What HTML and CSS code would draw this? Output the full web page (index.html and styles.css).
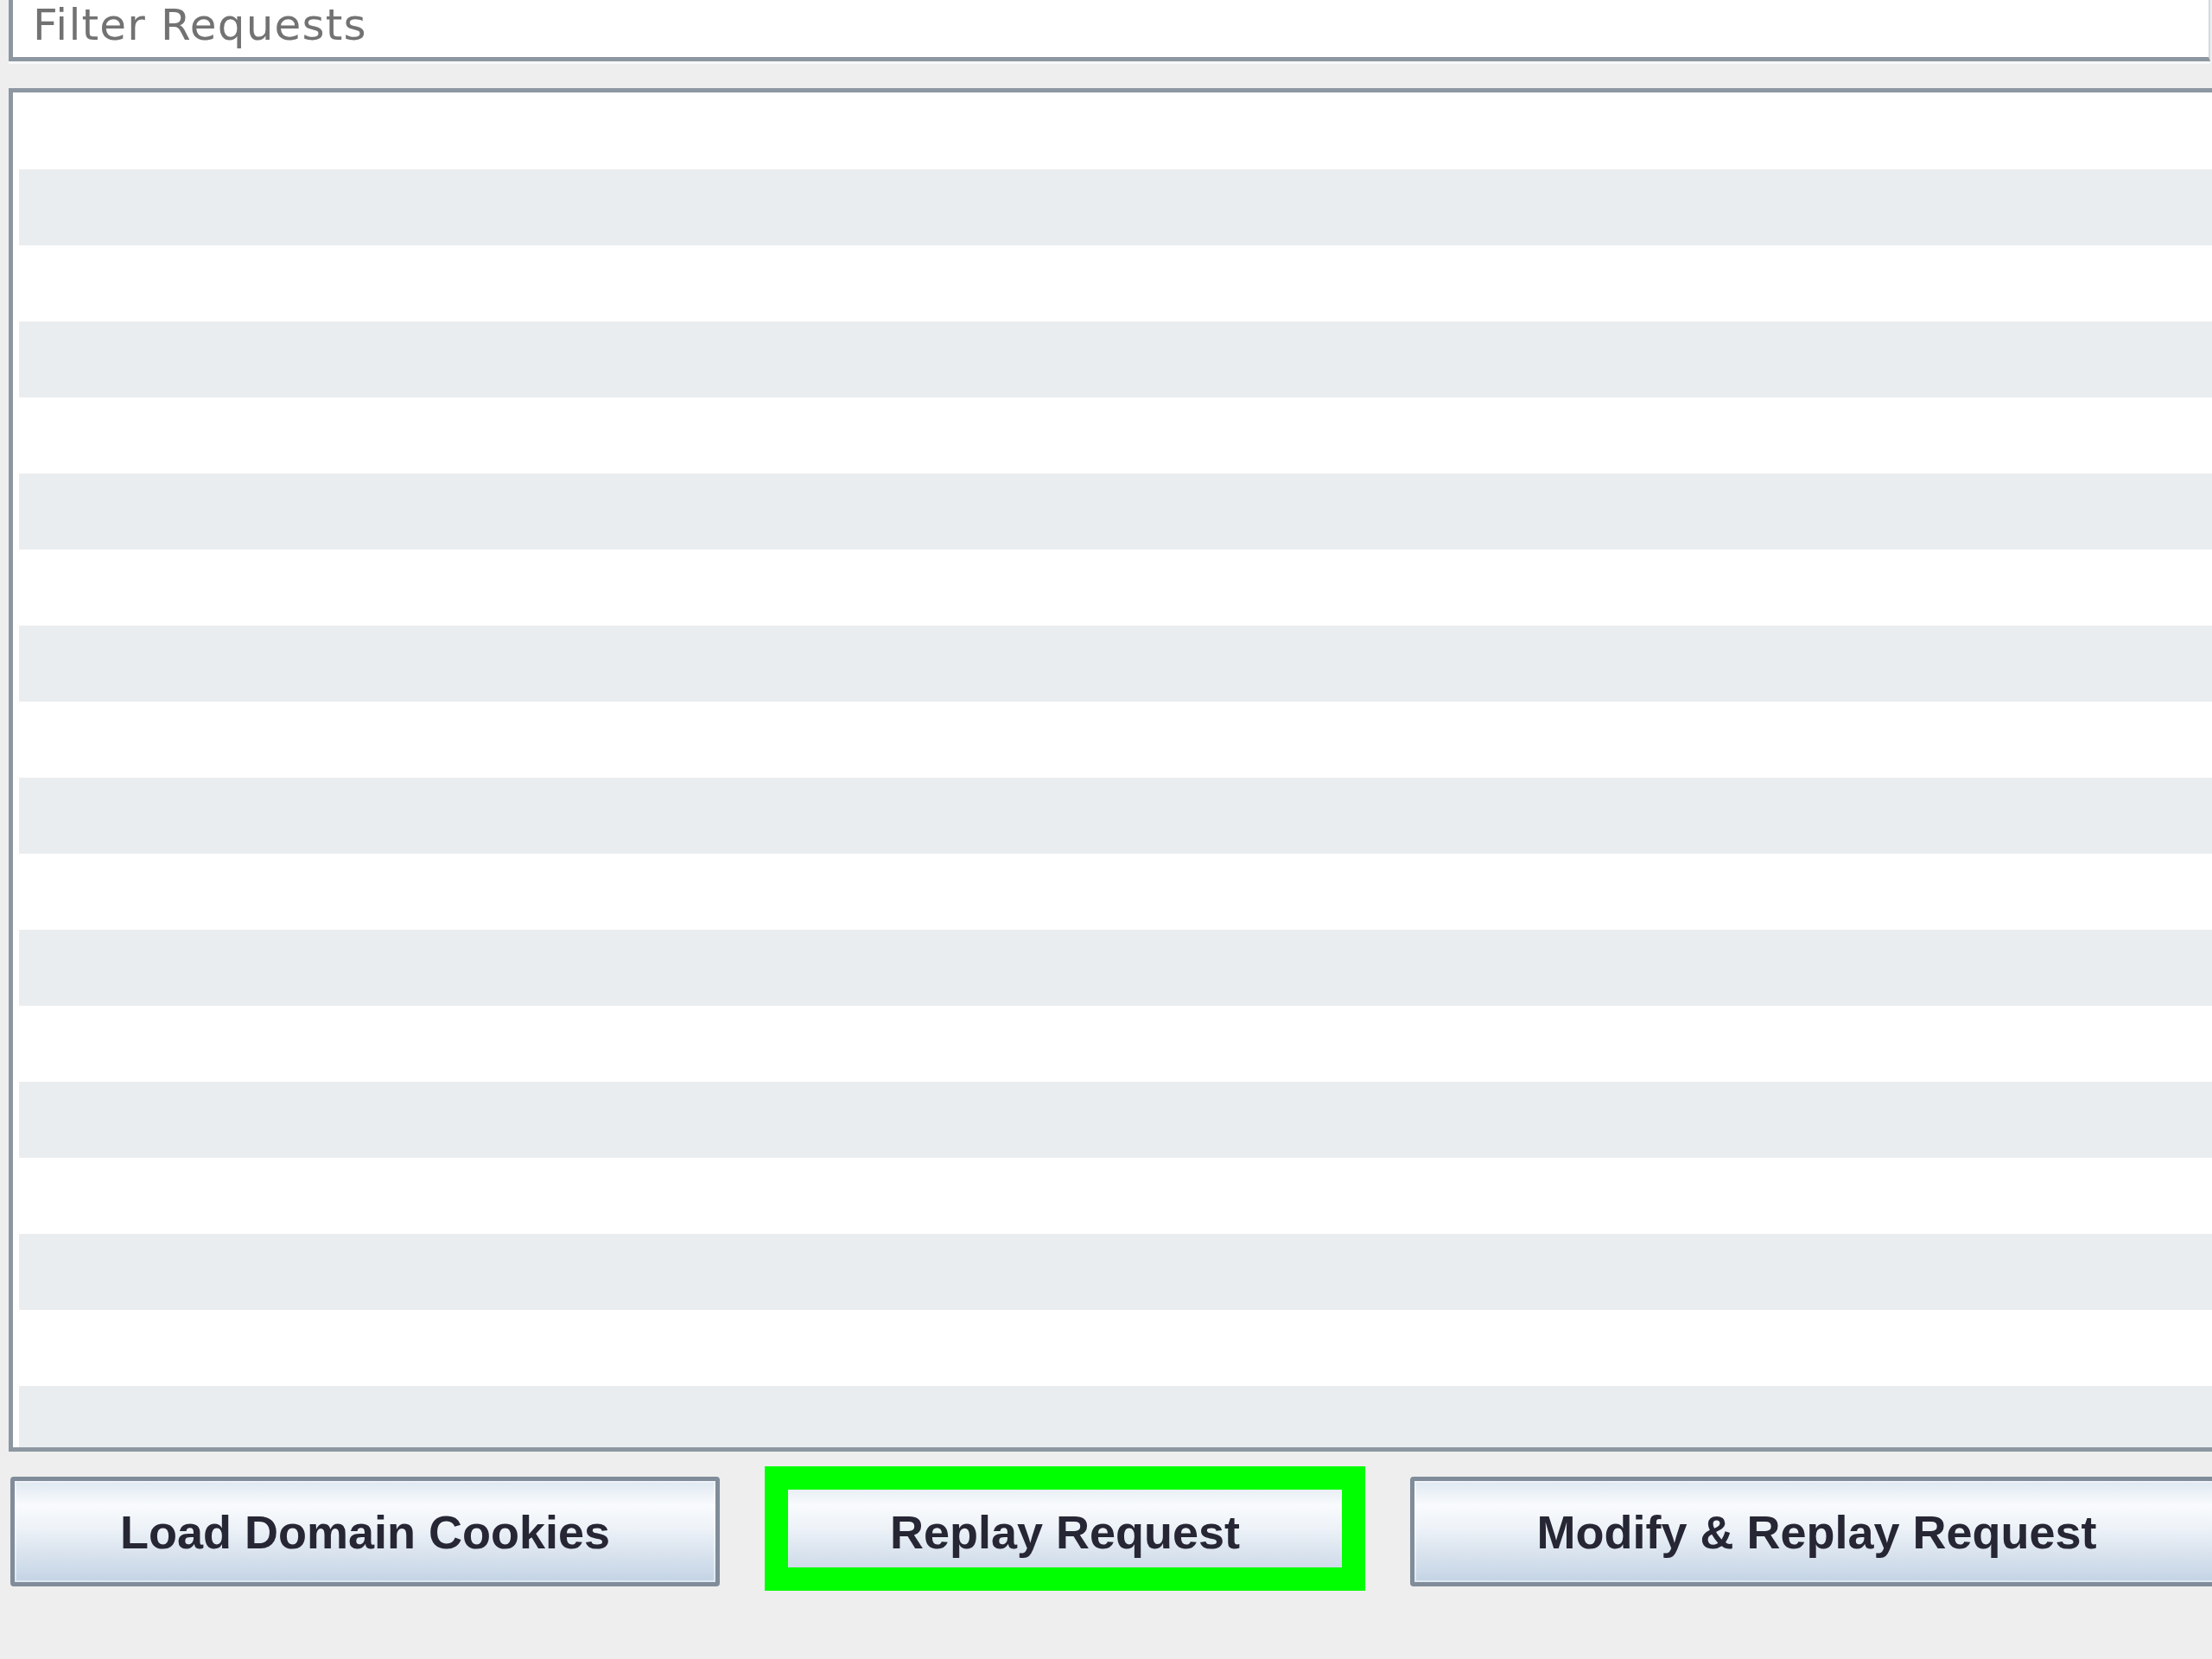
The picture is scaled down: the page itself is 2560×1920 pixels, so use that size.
FILE: index.html
```html
<!DOCTYPE html>
<html lang="en">
<head>
  <meta charset="UTF-8">
  <meta name="viewport" content="width=device-width, initial-scale=1.0">
  <title>Request Replay</title>
  <link rel="stylesheet" href="styles.css">
</head>
<body>
  <div class="window">
    <div class="filter">Filter Requests</div>

    <div class="requests">
      <div class="row"></div>
      <div class="row"></div>
      <div class="row"></div>
      <div class="row"></div>
      <div class="row"></div>
      <div class="row"></div>
      <div class="row"></div>
      <div class="row"></div>
      <div class="row"></div>
      <div class="row"></div>
      <div class="row"></div>
      <div class="row"></div>
      <div class="row"></div>
      <div class="row"></div>
      <div class="row"></div>
      <div class="row"></div>
      <div class="row"></div>
      <div class="row"></div>
    </div>

    <div class="actions">
      <button class="btn btn-load">Load Domain Cookies</button>
      <button class="btn btn-replay">Replay Request<span class="highlight"></span></button>
      <button class="btn btn-modify">Modify &amp; Replay Request</button>
    </div>
  </div>
</body>
</html>
```

FILE: styles.css
```css
html, body {
  margin: 0;
  padding: 0;
  overflow: hidden;
}

body {
  width: 2560px;
  height: 1920px;
  background-color: #eeeeee;
  font-family: 'DejaVu Sans', sans-serif;
}

.window {
  display: flex;
  flex-direction: column;
}

/* filter text field (top edge is cropped off) */
.filter {
  height: 66px;
  margin-top: -1px;
  margin-left: 10px;
  margin-right: 2px;
  padding-top: 1px;
  padding-left: 23px;
  background-color: #fff;
  border-left: 5px solid #8d97a1;
  border-bottom: 5px solid #8d97a1;
  border-right: 2px solid #d3d9df;
  box-shadow: 0 3px 0 #f7f9fb;
  color: #727272;
  font-size: 50px;
  letter-spacing: 1.2px;
  line-height: 58px;
}

/* request table */
.requests {
  height: 1567px;
  margin-top: 31px;
  margin-left: 10px;
  margin-right: -20px;
  padding: 1px 0 0 7px;
  background-color: #fff;
  border-top: 5px solid #8d97a1;
  border-left: 5px solid #8d97a1;
  border-bottom: 5px solid #8d97a1;
  overflow: hidden;
}

.row {
  height: 88px;
}

.row:nth-child(even) {
  background-color: #eaedf0;
}

/* bottom buttons */
.actions {
  display: flex;
  gap: 62px;
  margin-top: 29px;
  padding-left: 12px;
}

.btn {
  position: relative;
  flex: none;
  height: 127px;
  padding: 0;
  border: 5px solid #808c99;
  border-radius: 4px;
  background: linear-gradient(to bottom, #dfe8f1 0%, #f9fbfd 24%, #eef3f8 45%, #d9e3ee 72%, #c3d3e5 100%);
  box-shadow: inset 0 0 0 2px rgba(255, 255, 255, 0.45);
  color: #262634;
  font-family: 'Liberation Sans', Arial, sans-serif;
  font-weight: bold;
  font-size: 54px;
  cursor: pointer;
}

.btn-load {
  width: 821px;
}

.btn-replay {
  width: 675px;
}

.btn-modify {
  width: 941px;
}

/* green annotation frame */
.highlight {
  position: absolute;
  left: -15px;
  top: -17px;
  width: 641px;
  height: 90px;
  border: 27px solid #00ff00;
}
```
